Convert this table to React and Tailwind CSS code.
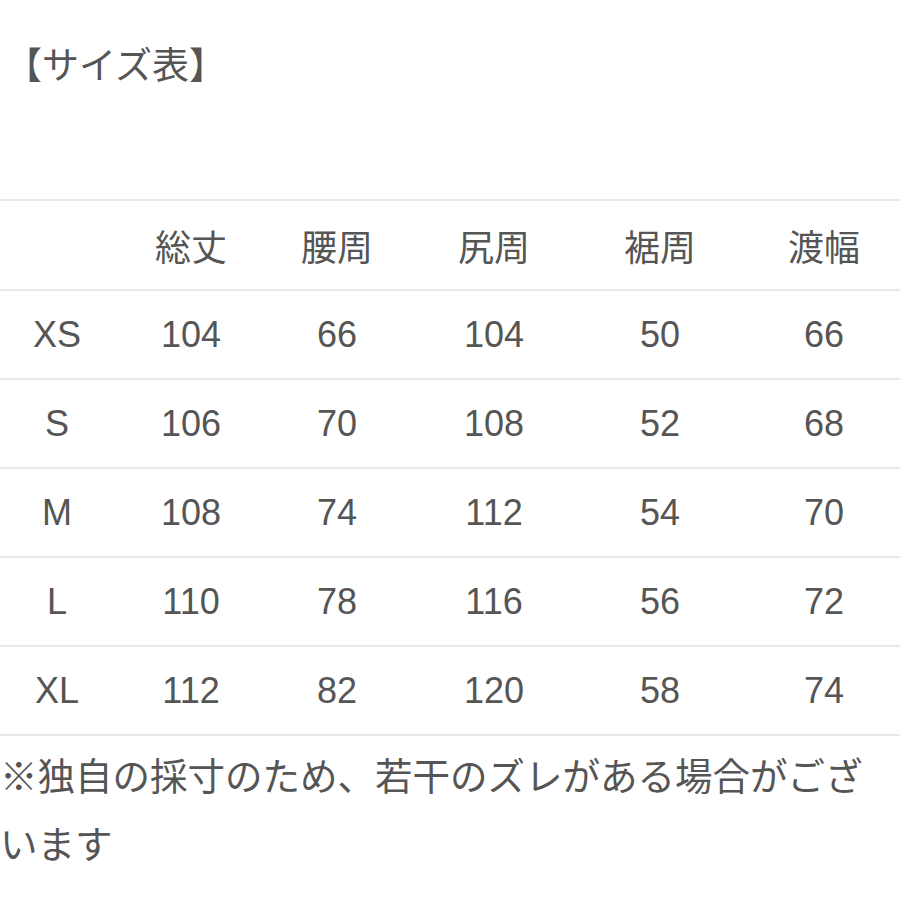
const jp = { fontFamily: '"Noto Sans CJK JP", "Noto Sans", sans-serif' };

const headers = ["総丈", "腰周", "尻周", "裾周", "渡幅"];

const rows = [
  ["XS", "104", "66", "104", "50", "66"],
  ["S", "106", "70", "108", "52", "68"],
  ["M", "108", "74", "112", "54", "70"],
  ["L", "110", "78", "116", "56", "72"],
  ["XL", "112", "82", "120", "58", "74"],
];

const grid = "grid grid-cols-[114px_154px_138px_176px_156px_1fr] items-center border-b-2 border-[#e8e8e8]";

export default function App() {
  return (
    <div className="w-[900px] h-[900px] overflow-hidden bg-white text-[#555555]">
      <div className="pt-[41px] pl-[5px] text-[37px] leading-[44px]" style={jp}>
        【サイズ表】
      </div>

      <div className="mt-[114px] border-t-2 border-[#e8e8e8]">
        <div className={grid + " h-[90px]"} style={jp}>
          <div></div>
          {headers.map((h, i) => (
            <div key={h} className={"text-center text-[36px] " + (i === 4 ? "pl-[10px]" : "")}>
              {h}
            </div>
          ))}
        </div>
        {rows.map((r) => (
          <div key={r[0]} className={grid + " h-[89px]"} style={{ fontFamily: '"Liberation Sans", Arial, sans-serif' }}>
            {r.map((c, i) => (
              <div key={i} className={"text-center text-[36px] " + (i === 5 ? "pl-[10px]" : "")}>
                {c}
              </div>
            ))}
          </div>
        ))}
      </div>

      <p className="pt-[4px] text-[37.5px] leading-[68px] whitespace-nowrap" style={jp}>
        ※独自の採寸のため、若干のズレがある場合がござ
        <br />
        います
      </p>
    </div>
  );
}
